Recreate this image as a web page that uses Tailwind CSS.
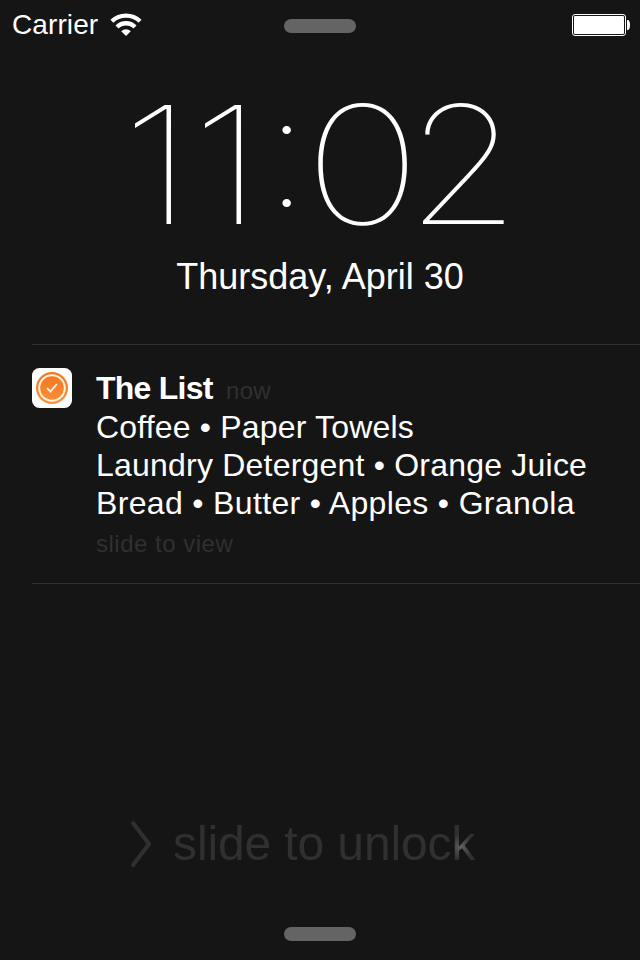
<!DOCTYPE html>
<html lang="en">
  <head>
    <meta charset="UTF-8" />
    <meta name="viewport" content="width=device-width, initial-scale=1.0" />
    <title>Lock Screen</title>
    <script src="https://cdn.jsdelivr.net/npm/@tailwindcss/browser@4"></script>
  </head>
  <body class="bg-[#151515] text-white font-['Liberation_Sans',Arial,sans-serif]">
    <div class="w-[640px] h-[960px] flex flex-col overflow-hidden whitespace-nowrap">
      <!-- Status bar -->
      <header class="h-12 shrink-0 grid grid-cols-3 pl-3 pr-[10px]">
        <div class="flex items-start">
          <span class="w-[98px] text-[28px] leading-[50px] tracking-[0.1px]">Carrier</span>
          <svg class="mt-3 w-8 h-6" viewBox="0 0 32 24" fill="none" stroke="#fff" stroke-width="4.3">
            <path d="M1.9 9.2a20.5 20.5 0 0 1 28.2 0" />
            <path d="M7 15a12.7 12.7 0 0 1 18 0" />
            <path d="M16 24l-4.8-4.8a7 7 0 0 1 9.6 0z" fill="#fff" stroke="none" />
          </svg>
        </div>
        <!-- Notification center grabber -->
        <div class="flex justify-center pt-[19px]">
          <div class="w-[72px] h-[14px] rounded-full bg-[#646464] mr-0.5"></div>
        </div>
        <div class="flex justify-end pt-[14px]">
          <svg class="w-[58px] h-[22px]" viewBox="0 0 58 22">
            <rect x="0.5" y="0.5" width="53" height="21" rx="2.5" fill="none" stroke="#fff" />
            <rect x="2" y="2" width="50" height="18" rx="1" fill="#fff" />
            <path d="M55 6h1.2q1.8 1 1.8 5t-1.8 5H55z" fill="#fff" />
          </svg>
        </div>
      </header>

      <!-- Clock -->
      <h1 class="mt-[37px] pl-[121px] h-[160px] shrink-0 flex font-['Inter',sans-serif] font-thin text-[164px] leading-[160px]">
        <span class="w-[70px] origin-left scale-x-120">1</span>
        <span class="w-[73.5px] origin-left scale-x-120">1</span>
        <!-- colon is centred on the digits -->
        <span class="w-[39.7px] origin-center scale-y-94 -translate-y-[14px]">:</span>
        <span class="w-[102.2px] origin-left scale-x-121">0</span>
        <span class="origin-left scale-x-112">2</span>
      </h1>
      <p class="h-[63px] shrink-0 text-center text-[36px] leading-[64px]">Thursday, April 30</p>

      <!-- Notification -->
      <section class="mt-9 ml-8 h-60 shrink-0 flex border-y border-[#303030] pt-[23px]">
        <svg class="w-10 h-10 mr-6" viewBox="0 0 40 40">
          <defs>
            <linearGradient id="orange" x1="0" y1="0" x2="0" y2="1">
              <stop offset="0" stop-color="#f4741f" />
              <stop offset="1" stop-color="#fb9038" />
            </linearGradient>
          </defs>
          <rect width="40" height="40" rx="7.5" fill="#fff" />
          <circle cx="20" cy="20" r="16" fill="url(#orange)" />
          <circle cx="20" cy="20" r="12.8" fill="none" stroke="#fff3dc" stroke-width="2" />
          <path d="M15 20.2l3.5 3.5 6.3-7.7" fill="none" stroke="#fff3e6" stroke-width="1.9" />
        </svg>
        <div class="pt-px text-[32px] leading-[38px]">
          <div class="h-[39px] flex items-baseline">
            <h2 class="w-[130px] font-bold tracking-[-0.75px]">The List</h2>
            <span class="text-[24px] leading-[38px] tracking-[0.3px] text-[#303030]">now</span>
          </div>
          <p class="tracking-[0.18px]">Coffee • Paper Towels</p>
          <p class="tracking-[0.21px]">Laundry Detergent • Orange Juice</p>
          <p class="tracking-[0.34px]">Bread • Butter • Apples • Granola</p>
          <p class="text-[24px] leading-[44px] tracking-[0.5px] text-[#303030]">slide to view</p>
        </div>
      </section>

      <!-- Slide to unlock -->
      <div class="mt-[227px] ml-[130px] h-16 shrink-0 flex items-start">
        <svg class="mt-[9px] w-[22px] h-12 mr-[21px]" viewBox="0 0 22 48" fill="none" stroke="#303030" stroke-width="4" stroke-linecap="round" stroke-linejoin="round">
          <path d="M3 3l16 21L3 45" />
        </svg>
        <p class="text-[48px] leading-[66px] tracking-[-0.12px] text-transparent bg-clip-text bg-[radial-gradient(circle_at_288px_36px,#606060_0,#484848_6px,#303030_13px)]">slide to unlock</p>
      </div>

      <!-- Control center grabber -->
      <div class="mt-[52px] mx-auto w-[72px] h-[14px] shrink-0 rounded-full bg-[#646464]"></div>
    </div>
  </body>
</html>
